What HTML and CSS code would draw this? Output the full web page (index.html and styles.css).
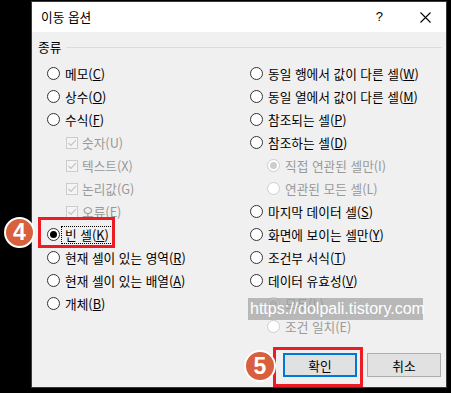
FILE: index.html
```html
<!DOCTYPE html>
<html lang="ko">
<head>
<meta charset="utf-8">
<title>이동 옵션</title>
<link rel="stylesheet" href="styles.css">
</head>
<body>
<div class="dialog">
  <div class="titlebar">
    <span class="title">이동 옵션</span>
    <span class="help">?</span>
    <svg class="close" width="11" height="11" viewBox="0 0 11 11"><path d="M0.5 0.5 L10.5 10.5 M10.5 0.5 L0.5 10.5" stroke="#000" stroke-width="1.1" fill="none"/></svg>
  </div>
  <div class="content">
    <div class="group-head"><span class="group-label">종류</span><div class="rule"></div></div>
    <div class="cols">
      <div class="col">
        <div class="row"><span class="radio"></span><span class="lbl">메모(<u>C</u>)</span></div>
        <div class="row"><span class="radio"></span><span class="lbl">상수(<u>O</u>)</span></div>
        <div class="row"><span class="radio"></span><span class="lbl">수식(<u>F</u>)</span></div>
        <div class="row sub-l"><span class="check"><svg width="10" height="10" viewBox="0 0 10 10"><path d="M1.5 5 L4 7.5 L8.8 2.2" stroke="#c4c4c4" stroke-width="1.2" fill="none"/></svg></span><span class="lbl dis">숫자(U)</span></div>
        <div class="row sub-l"><span class="check"><svg width="10" height="10" viewBox="0 0 10 10"><path d="M1.5 5 L4 7.5 L8.8 2.2" stroke="#c4c4c4" stroke-width="1.2" fill="none"/></svg></span><span class="lbl dis">텍스트(X)</span></div>
        <div class="row sub-l"><span class="check"><svg width="10" height="10" viewBox="0 0 10 10"><path d="M1.5 5 L4 7.5 L8.8 2.2" stroke="#c4c4c4" stroke-width="1.2" fill="none"/></svg></span><span class="lbl dis">논리값(G)</span></div>
        <div class="row sub-l"><span class="check"><svg width="10" height="10" viewBox="0 0 10 10"><path d="M1.5 5 L4 7.5 L8.8 2.2" stroke="#c4c4c4" stroke-width="1.2" fill="none"/></svg></span><span class="lbl dis">오류(E)</span></div>
        <div class="row"><span class="radio on"></span><span class="lbl focus">빈 셀(<u>K</u>)</span></div>
        <div class="row"><span class="radio"></span><span class="lbl">현재 셀이 있는 영역(<u>R</u>)</span></div>
        <div class="row"><span class="radio"></span><span class="lbl">현재 셀이 있는 배열(<u>A</u>)</span></div>
        <div class="row"><span class="radio"></span><span class="lbl">개체(<u>B</u>)</span></div>
      </div>
      <div class="col">
        <div class="row"><span class="radio"></span><span class="lbl">동일 행에서 값이 다른 셀(<u>W</u>)</span></div>
        <div class="row"><span class="radio"></span><span class="lbl">동일 열에서 값이 다른 셀(<u>M</u>)</span></div>
        <div class="row"><span class="radio"></span><span class="lbl">참조되는 셀(<u>P</u>)</span></div>
        <div class="row"><span class="radio"></span><span class="lbl">참조하는 셀(<u>D</u>)</span></div>
        <div class="row sub-r"><span class="radio dis on"></span><span class="lbl dis">직접 연관된 셀만(I)</span></div>
        <div class="row sub-r"><span class="radio dis"></span><span class="lbl dis">연관된 모든 셀(L)</span></div>
        <div class="row"><span class="radio"></span><span class="lbl">마지막 데이터 셀(<u>S</u>)</span></div>
        <div class="row"><span class="radio"></span><span class="lbl">화면에 보이는 셀만(<u>Y</u>)</span></div>
        <div class="row"><span class="radio"></span><span class="lbl">조건부 서식(<u>T</u>)</span></div>
        <div class="row"><span class="radio"></span><span class="lbl">데이터 유효성(<u>V</u>)</span></div>
        <div class="row sub-r"><span class="radio dis on"></span><span class="lbl dis">모두(L)</span></div>
        <div class="row sub-r"><span class="radio dis"></span><span class="lbl dis">조건 일치(E)</span></div>
      </div>
    </div>
    <div class="buttons">
      <button class="btn primary">확인</button>
      <button class="btn">취소</button>
    </div>
  </div>
</div>

<div class="mark mark-blank"></div>
<div class="mark mark-ok"></div>
<div class="badge badge-4">4</div>
<div class="badge badge-5">5</div>
<div class="watermark">https://dolpali.tistory.com</div>
</body>
</html>
```

FILE: styles.css
```css
html, body {
  margin: 0;
  padding: 0;
}
body {
  background: #000;
  width: 451px;
  height: 393px;
  overflow: hidden;
  position: relative;
  font-family: "Noto Sans CJK KR", "Noto Sans", sans-serif;
  font-size: 12.7px;
  color: #000;
}
.dialog {
  margin: 1px 0 0 31px;
  width: 416px;
  height: 387px;
  box-sizing: border-box;
  border: 1px solid #3a3a3a;
  display: flex;
  flex-direction: column;
  background: #f0f0f0;
}
.titlebar {
  height: 30px;
  flex: none;
  background: #fff;
  display: flex;
  align-items: center;
  padding: 0 15px 0 9px;
}
.title {
  font-size: 12.7px;
  line-height: 14px;
}
.help {
  margin-left: auto;
  font-family: "Liberation Sans", sans-serif;
  font-size: 13px;
  line-height: 14px;
  margin-right: 37px;
}
.close {
  display: block;
}
.content {
  flex: 1;
  display: flex;
  flex-direction: column;
}
.group-head {
  display: flex;
  align-items: center;
  height: 14px;
  margin-top: 8px;
  padding: 0 4px 0 6px;
}
.group-label {
  line-height: 14px;
}
.rule {
  flex: 1;
  height: 1px;
  background: #dcdcdc;
  margin-left: 5px;
}
.cols {
  margin-top: 8px;
  padding-left: 15px;
  display: grid;
  grid-template-columns: 203px 1fr;
}
.row {
  height: 23px;
  display: flex;
  align-items: center;
  gap: 5px;
}
.lbl {
  line-height: 14px;
  white-space: nowrap;
}
.lbl u {
  text-underline-offset: 1px;
}
.lbl.dis {
  color: #999999;
}
.lbl.focus {
  margin-left: -4px;
  padding: 1px 3px;
  border: 1px dotted #000;
}
.sub-l {
  padding-left: 19px;
  gap: 4px;
}
.sub-r {
  padding-left: 17px;
}
.radio {
  width: 13px;
  height: 13px;
  box-sizing: border-box;
  border: 1px solid #333;
  border-radius: 50%;
  background: #fff;
  flex: none;
  display: flex;
  align-items: center;
  justify-content: center;
}
.radio.on::after {
  content: "";
  width: 7px;
  height: 7px;
  border-radius: 50%;
  background: #000;
}
.radio.dis {
  border-color: #cdcdcd;
  background: #fff;
}
.radio.dis.on::after {
  background: #cdcdcd;
}
.check {
  width: 12px;
  height: 12px;
  box-sizing: border-box;
  border: 1px solid #cccccc;
  background: #f4f4f4;
  flex: none;
  display: flex;
  align-items: center;
  justify-content: center;
}
.check svg {
  display: block;
}
.buttons {
  margin-top: 15px;
  display: flex;
  justify-content: flex-end;
  gap: 10px;
  padding-right: 5px;
}
.btn {
  width: 74px;
  height: 24px;
  box-sizing: border-box;
  border: 1px solid #adadad;
  background: #e1e1e1;
  font-family: "Noto Sans CJK KR", sans-serif;
  font-size: 12.7px;
  color: #000;
  padding: 0;
  margin: 0;
}
.btn.primary {
  border: 2px solid #0078d7;
}
.mark {
  position: absolute;
  box-sizing: border-box;
  border: 3px solid #ec1c24;
}
.mark-blank {
  left: 38px;
  top: 217px;
  width: 77px;
  height: 31px;
}
.mark-ok {
  left: 273px;
  top: 347px;
  width: 90px;
  height: 40px;
}
.badge {
  position: absolute;
  box-sizing: border-box;
  border: 2px solid #fff;
  border-radius: 50%;
  background: #d8603c;
  color: #fff;
  font-family: "Liberation Sans", sans-serif;
  font-weight: bold;
  font-size: 23px;
  display: flex;
  align-items: center;
  justify-content: center;
}
.badge-4 {
  left: 4px;
  top: 217px;
  width: 31px;
  height: 31px;
}
.badge-5 {
  left: 244px;
  top: 350px;
  width: 32px;
  height: 32px;
}
.watermark {
  position: absolute;
  left: 248px;
  top: 298px;
  width: 175px;
  height: 22px;
  background: rgba(160, 160, 160, 0.7);
  color: #fff;
  font-family: "Liberation Sans", sans-serif;
  font-size: 16px;
  line-height: 22px;
  white-space: nowrap;
  padding-left: 2px;
  box-sizing: border-box;
}
```
